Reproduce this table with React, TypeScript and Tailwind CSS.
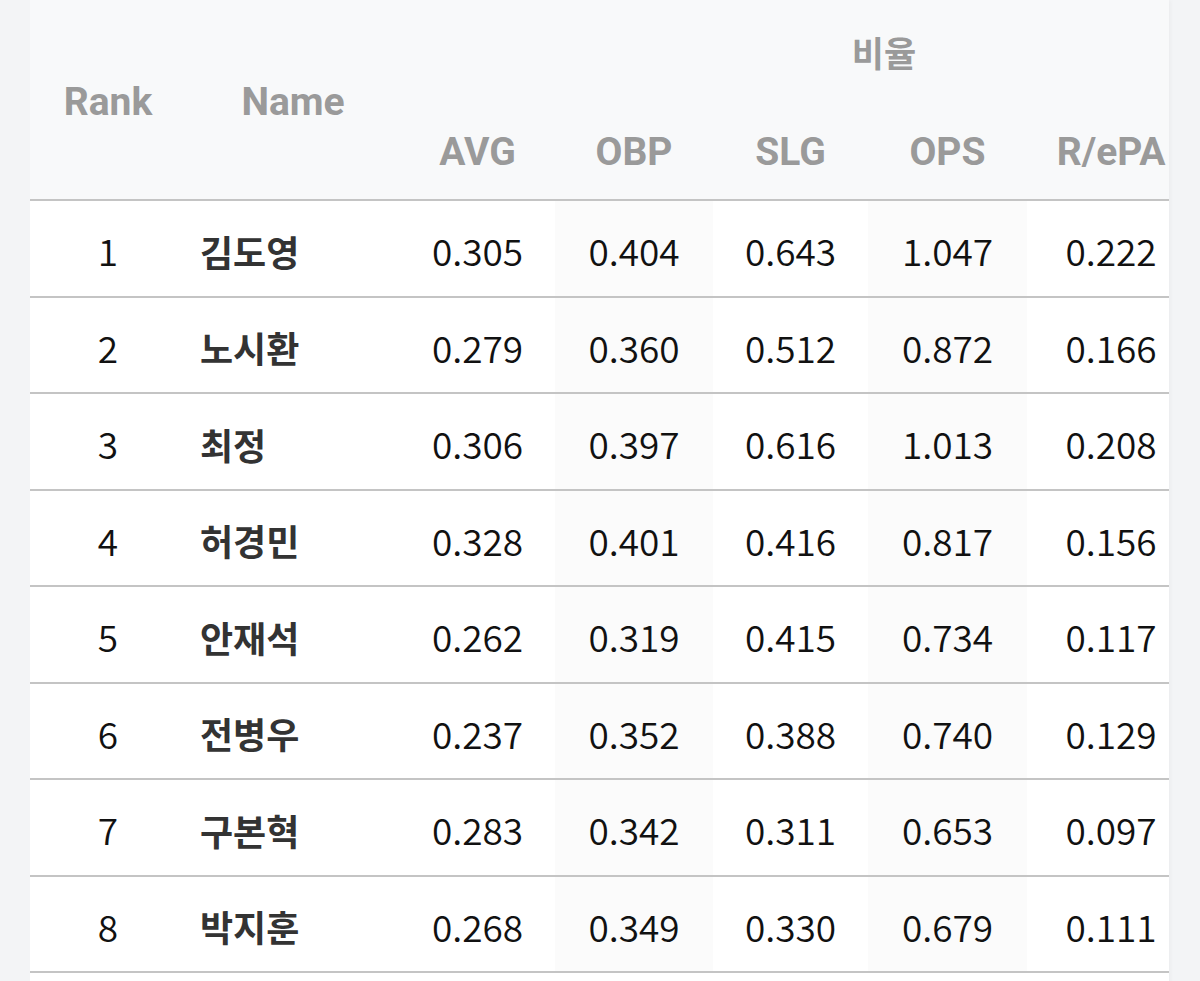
const rows = [
  { rank: 1, name: "김도영", avg: "0.305", obp: "0.404", slg: "0.643", ops: "1.047", repa: "0.222" },
  { rank: 2, name: "노시환", avg: "0.279", obp: "0.360", slg: "0.512", ops: "0.872", repa: "0.166" },
  { rank: 3, name: "최정", avg: "0.306", obp: "0.397", slg: "0.616", ops: "1.013", repa: "0.208" },
  { rank: 4, name: "허경민", avg: "0.328", obp: "0.401", slg: "0.416", ops: "0.817", repa: "0.156" },
  { rank: 5, name: "안재석", avg: "0.262", obp: "0.319", slg: "0.415", ops: "0.734", repa: "0.117" },
  { rank: 6, name: "전병우", avg: "0.237", obp: "0.352", slg: "0.388", ops: "0.740", repa: "0.129" },
  { rank: 7, name: "구본혁", avg: "0.283", obp: "0.342", slg: "0.311", ops: "0.653", repa: "0.097" },
  { rank: 8, name: "박지훈", avg: "0.268", obp: "0.349", slg: "0.330", ops: "0.679", repa: "0.111" },
];

const latin = "font-['Roboto','Noto_Sans_CJK_KR',sans-serif]";
const korean = "font-['Noto_Sans_CJK_KR',sans-serif]";

export default function App() {
  return (
    <main className="min-h-screen bg-[#f3f4f6] pl-[30px] pr-[31px]">
      <div className="w-[1139px] overflow-hidden bg-white pb-4 shadow-[2px_0_4px_rgba(0,0,0,0.03)]">
        <table className="w-[1165px] table-fixed border-collapse">
          <colgroup>
            <col className="w-[156px]" />
            <col className="w-[214px]" />
            <col className="w-[155px]" />
            <col className="w-[158px]" />
            <col className="w-[155px]" />
            <col className="w-[159px]" />
            <col className="w-[168px]" />
          </colgroup>
          <thead className="bg-[#f8f9fa] text-[#9a9a9a]">
            <tr className="h-[104px]">
              <th rowSpan={2} className={`${latin} pt-[6px] text-[39px] font-bold`}>
                Rank
              </th>
              <th rowSpan={2} className={`${latin} pt-[6px] text-[39px] font-bold`}>
                Name
              </th>
              <th colSpan={5} className={`${korean} pl-[173px] text-[35px] font-bold`}>
                비율
              </th>
            </tr>
            <tr className="h-[96px] border-b-2 border-[#c4c4c4]">
              {["AVG", "OBP", "SLG", "OPS", "R/ePA"].map((h) => (
                <th key={h} className={`${latin} pt-[2px] text-[39px] font-bold`}>
                  {h}
                </th>
              ))}
            </tr>
          </thead>
          <tbody className={`${korean} text-[37px] font-[350] text-[#111]`}>
            {rows.map((r) => (
              <tr key={r.rank} className="h-[96.5px] border-b-2 border-[#c4c4c4]">
                <td className="pt-[5px] text-center">{r.rank}</td>
                <td className="pl-[14px] pt-[5px] text-[36px] font-bold text-[#333]">{r.name}</td>
                <td className="pt-[5px] text-center">{r.avg}</td>
                <td className="bg-[#fbfbfb] pt-[5px] text-center">{r.obp}</td>
                <td className="pt-[5px] text-center">{r.slg}</td>
                <td className="bg-[#fbfbfb] pt-[5px] text-center">{r.ops}</td>
                <td className="pt-[5px] text-center">{r.repa}</td>
              </tr>
            ))}
          </tbody>
        </table>
      </div>
    </main>
  );
}
